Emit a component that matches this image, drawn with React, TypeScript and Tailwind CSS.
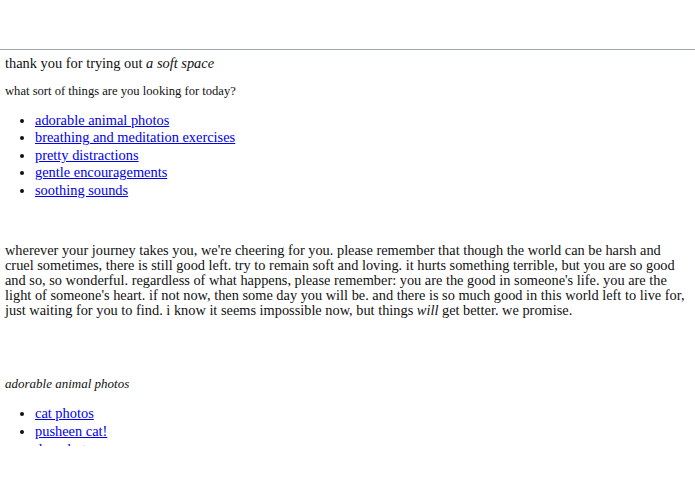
export default function App() {
  const topics = [
    'adorable animal photos',
    'breathing and meditation exercises',
    'pretty distractions',
    'gentle encouragements',
    'soothing sounds',
  ]
  const animals = ['cat photos', 'pusheen cat!', 'dog photos']

  return (
    <div className="h-[494px] w-[695px] bg-white font-['Liberation_Serif',serif] text-[#111]">
      <div className="h-[49px]" />
      <div className="h-[397px] overflow-hidden border-t border-[#9aa5ad] px-[5px]">
        <p className="mt-[2px] text-[14.4px] leading-[22px]">
          thank you for trying out <em>a soft space</em>
        </p>
        <p className="mt-[9px] text-[12.6px] leading-[16px]">what sort of things are you looking for today?</p>
        <ul className="mt-[13px] list-disc pl-[30px] text-[14.4px] leading-[17.4px]">
          {topics.map((t) => (
            <li key={t}>
              <a href="#" className="text-[#0000ee] underline">
                {t}
              </a>
            </li>
          ))}
        </ul>
        <p className="mt-[44px] text-[14.35px] leading-[15px]">
          wherever your journey takes you, we're cheering for you. please remember that though the world can be harsh and
          cruel sometimes, there is still good left. try to remain soft and loving. it hurts something terrible, but you
          are so good and so, so wonderful. regardless of what happens, please remember: you are the good in someone's
          life. you are the light of someone's heart. if not now, then some day you will be. and there is so much good in
          this world left to live for, just waiting for you to find. i know it seems impossible now, but things{' '}
          <em>will</em> get better. we promise.
        </p>
        <p className="mt-[58px] text-[13px] italic leading-[16px]">adorable animal photos</p>
        <ul className="mt-[13px] list-disc pl-[30px] text-[14.4px] leading-[17.8px]">
          {animals.map((t) => (
            <li key={t}>
              <a href="#" className="text-[#0000ee] underline">
                {t}
              </a>
            </li>
          ))}
        </ul>
      </div>
    </div>
  )
}
